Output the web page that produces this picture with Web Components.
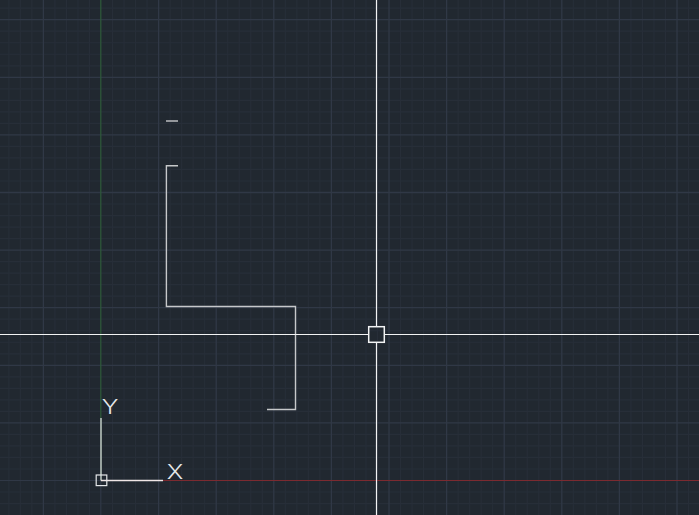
<!DOCTYPE html>
<html lang="en">
<head>
<meta charset="utf-8">
<title>CAD viewport</title>
<style>html,body{margin:0;padding:0;background:#212830;overflow:hidden}</style>
</head>
<body>
<cad-viewport>
  <cad-grid></cad-grid>
  <cad-geometry></cad-geometry>
  <cad-ucs></cad-ucs>
  <cad-crosshair></cad-crosshair>
</cad-viewport>
<script>
const W=699,H=515;
const layerCss=`:host{display:block;position:absolute;inset:0}svg{display:block;position:absolute;left:0;top:0}`;
const open=`<svg xmlns="http://www.w3.org/2000/svg" width="${W}" height="${H}" viewBox="0 0 ${W} ${H}">`;
class Layer extends HTMLElement{
  connectedCallback(){ if(this.shadowRoot) return;
    this.attachShadow({mode:'open'}).innerHTML=`<style>${layerCss}</style>${open}${this.art()}</svg>`; }
}
customElements.define('cad-viewport',class extends HTMLElement{
  connectedCallback(){ if(this.shadowRoot) return;
    this.attachShadow({mode:'open'}).innerHTML=`<style>:host{display:block;position:relative;width:${W}px;height:${H}px;overflow:hidden;background:#212830}</style><slot></slot>`; }
});
customElements.define('cad-grid',class extends Layer{
  art(){
    const step=57.6,minor=step/5,ox=101,oy=480.5;
    let mi='',ma='';
    const line=(x1,y1,x2,y2)=>`<line x1="${x1}" y1="${y1}" x2="${x2}" y2="${y2}"/>`;
    for(let i=-10;i<=60;i++){
      const x=+(ox+i*minor).toFixed(2);
      if(x<0||x>W||i===0)continue;
      if(i%5===0)ma+=line(x,0,x,H);else mi+=line(x,0,x,H);
    }
    for(let i=-5;i<=45;i++){
      const y=+(oy-i*minor).toFixed(2);
      if(y<0||y>H||i===0)continue;
      if(i%5===0)ma+=line(0,y,W,y);else mi+=line(0,y,W,y);
    }
    return `<g stroke="#272e38" stroke-width="1.2">${mi}</g>
    <g stroke="#303846" stroke-width="1.3">${ma}</g>
    <g>
      <line x1="100.8" y1="0" x2="100.8" y2="418" stroke="#2f5a3a" stroke-width="1.2"/>
      <line x1="100.8" y1="418" x2="100.8" y2="${H}" stroke="#303846" stroke-width="1.2"/>
      <line x1="0" y1="480.5" x2="163" y2="480.5" stroke="#303846"/>
      <line x1="163" y1="480.5" x2="${W}" y2="480.5" stroke="#7c2a30"/>
    </g>`;
  }
});
customElements.define('cad-geometry',class extends Layer{
  art(){
    return `<g fill="none" stroke="#c6c8ca" stroke-width="1.4">
      <path d="M166 121H178"/>
      <path d="M178 165.7H166.4V306.5H295.5V409.5H267"/>
    </g>`;
  }
});
customElements.define('cad-ucs',class extends Layer{
  art(){
    return `<g fill="none" stroke-width="1.4">
      <path d="M101 418V480.5" stroke="#c9d6cb"/>
      <path d="M101 480.5H163" stroke="#f0e6e6"/>
      <rect x="96.2" y="475" width="10.6" height="10.6" stroke="#e4e6e8" stroke-width="1.2"/>
    </g>
    <g opacity=".99" fill="#e9ebed" font-family="Inter, Roboto, sans-serif" font-weight="300" font-size="20" text-anchor="middle">
      <text transform="translate(110 414) scale(1.25 1)">Y</text>
      <text transform="translate(175 479.4) scale(1.25 1)">X</text>
    </g>`;
  }
});
customElements.define('cad-crosshair',class extends Layer{
  art(){
    return `<g fill="none" stroke="#f2f3f4" stroke-width="1.2">
      <path d="M376.5 0V326M376.5 343V${H}M0 334.5H368M385 334.5H${W}"/>
      <rect x="368.7" y="326.7" width="15.6" height="15.6" stroke-width="1.5"/>
    </g>`;
  }
});
</script>
</body>
</html>
